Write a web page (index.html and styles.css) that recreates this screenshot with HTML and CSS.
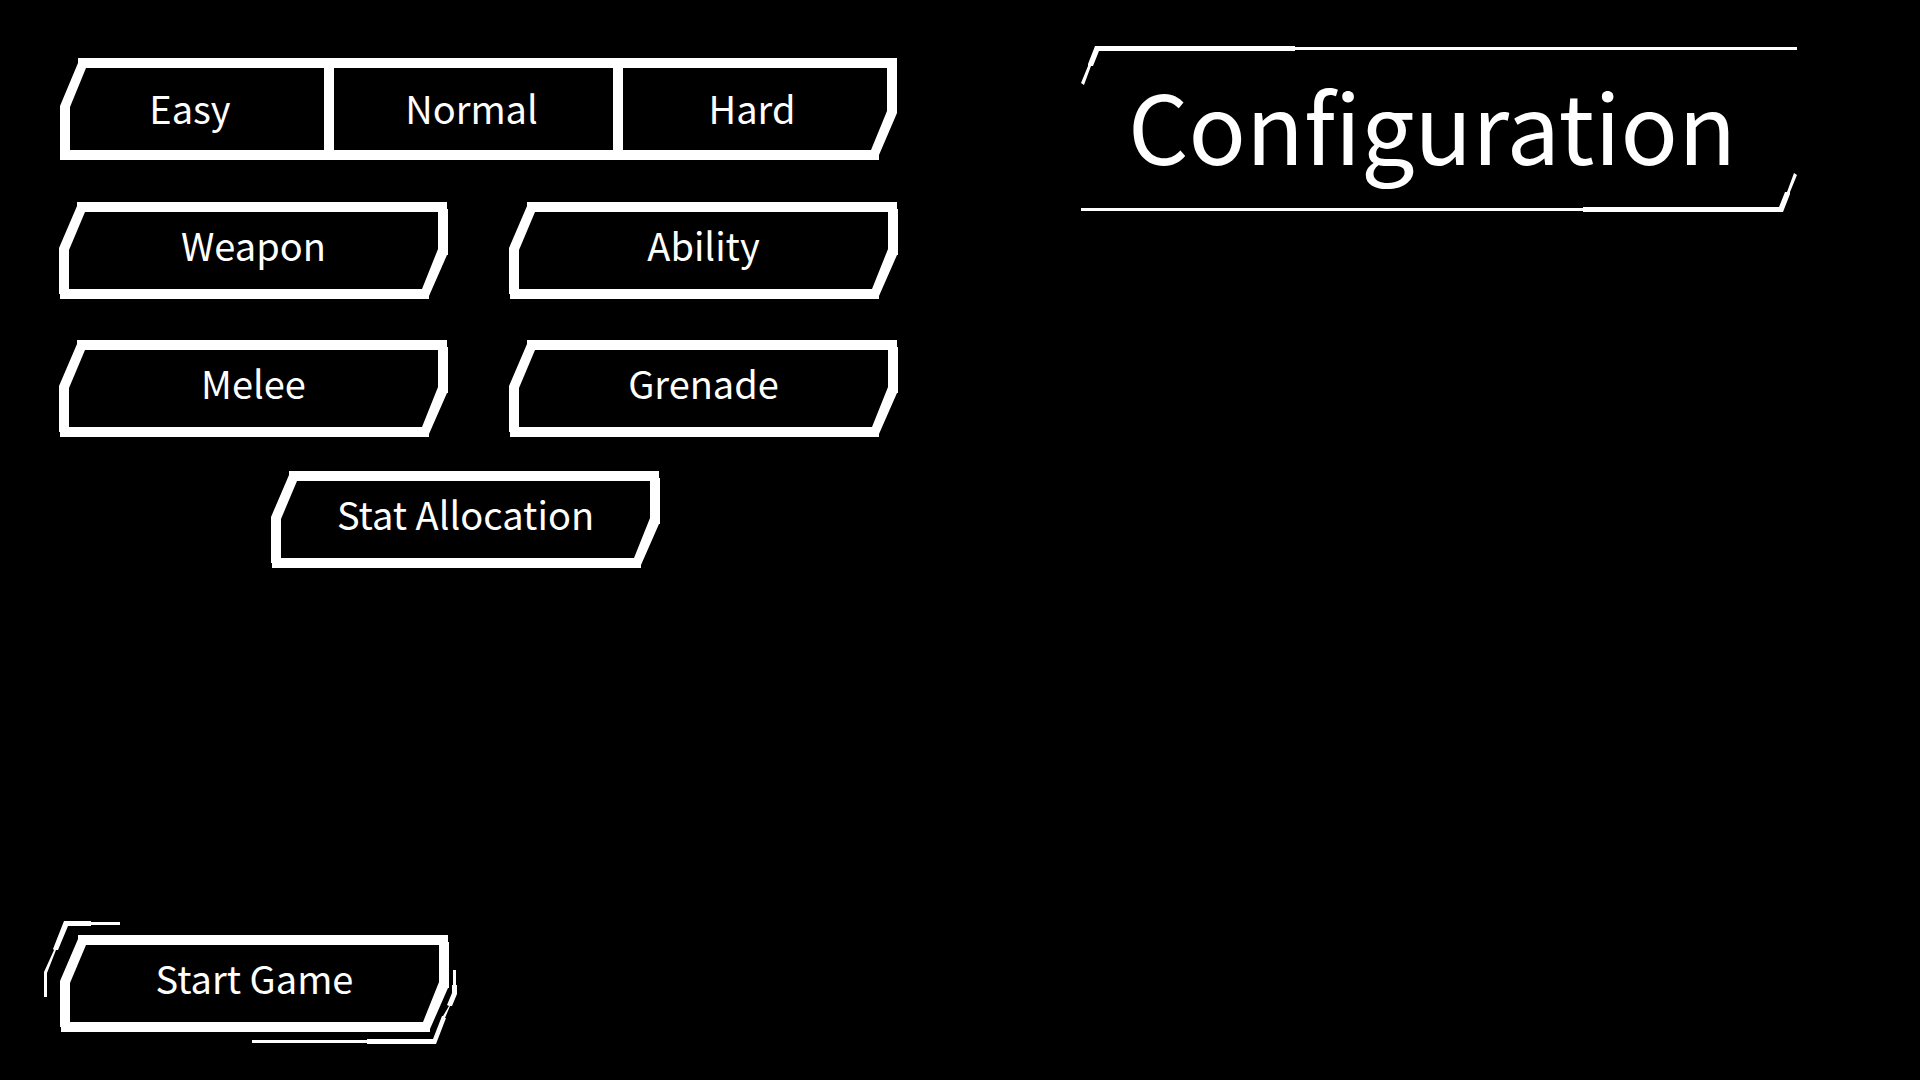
FILE: index.html
```html
<!DOCTYPE html>
<html lang="en">
<head>
<meta charset="utf-8">
<title>Configuration</title>
<meta name="viewport" content="width=device-width, initial-scale=1">
<link rel="stylesheet" href="styles.css">
</head>
<body>
<main class="screen">
  <section class="options" aria-label="Game options">
    <div class="difficulty" role="group" aria-label="Difficulty">
      <button class="level" type="button">Easy</button>
      <button class="level" type="button">Normal</button>
      <button class="level" type="button">Hard</button>
    </div>
    <div class="loadout">
      <button class="cut-button" type="button"><span>Weapon</span></button>
      <button class="cut-button" type="button"><span>Ability</span></button>
      <button class="cut-button" type="button"><span>Melee</span></button>
      <button class="cut-button" type="button"><span>Grenade</span></button>
    </div>
    <button class="cut-button stats" type="button"><span>Stat Allocation</span></button>
    <div class="start">
      <button class="cut-button" type="button"><span>Start Game</span></button>
      <svg class="trim trim-top" width="76" height="76" viewBox="0 0 76 76" aria-hidden="true">
        <path d="M20 0H47V1H76V4H47V5H24L14 29H12L3 52V76H0V51L10 29L9 28Z"/>
      </svg>
      <svg class="trim trim-bottom" width="205" height="74" viewBox="0 0 205 74" aria-hidden="true">
        <path d="M201 0H204V15H205V24L200 36H198L193 48H194L184 74H115V73H0V70H115V69H181L190 46H191L197 36L195 35L200 23V15H201Z"/>
      </svg>
    </div>
  </section>
  <header class="title">
    <h1>Configuration</h1>
  </header>
</main>
</body>
</html>
```
FILE: styles.css
```css
* {
  box-sizing: border-box;
}

body {
  margin: 0;
  background: #000;
  color: #fff;
  font-family: "Noto Sans CJK SC", "Noto Sans", sans-serif;
}

button {
  margin: 0;
  border: 0;
  padding: 0;
  color: inherit;
  font: inherit;
  font-size: 38px;
  line-height: 48px;
  cursor: pointer;
}

.screen {
  display: grid;
  grid-template-columns: 839fr 716fr;
  column-gap: 183px;
  min-height: 100vh;
  padding: 46px 123px 48px 59px;
}

.options {
  display: flex;
  flex-direction: column;
  padding-top: 12px;
}

/* Three-way switch inside one cut-corner frame */
.difficulty {
  position: relative;
  display: grid;
  grid-template-columns: 264fr 279fr 274fr;
  gap: 10px;
  height: 102px;
  margin: 0 1px 42px;
  background: #fff;
  clip-path: polygon(18px 0, 100% 0, 100% 55px, calc(100% - 18px) 97px, calc(100% - 18px) 100%, 0 100%, 0 48px, 18px 5px);
}

.level {
  margin: 10px 0;
  padding: 0 4px 2px 0;
  background: #000;
}

.level:first-child {
  clip-path: polygon(26px 0, 100% 0, 100% 100%, 10px 100%, 10px 39px);
}

.level:last-child {
  padding-right: 16px;
  clip-path: polygon(0 0, calc(100% - 10px) 0, calc(100% - 10px) 43px, calc(100% - 26px) 100%, 0 100%);
}

.loadout {
  display: grid;
  grid-template-columns: 1fr 1fr;
  gap: 41px 61px;
  margin-bottom: 34px;
}

.cut-button {
  display: grid;
  height: 97px;
  background: #fff;
  clip-path: polygon(18px 0, calc(100% - 1px) 0, calc(100% - 1px) 7px, 100% 7px, 100% 53px, calc(100% - 1px) 53px, calc(100% - 19px) 94px, calc(100% - 19px) 100%, 1px 100%, 1px 92px, 0 92px, 0 46px, 18px 4px);
}

.cut-button span {
  display: grid;
  place-items: center;
  height: 97px;
  padding-bottom: 12px;
  background: #000;
  clip-path: polygon(26px 10px, calc(100% - 10px) 10px, calc(100% - 10px) 47px, calc(100% - 26px) 87px, 10px 87px, 10px 48px);
}

.stats {
  width: calc((100% - 61px) / 2);
  margin-left: 212px;
}

.start {
  position: relative;
  display: grid;
  width: calc((100% - 61px) / 2);
  margin: auto 0 0 1px;
}

.trim {
  position: absolute;
  fill: #fff;
  pointer-events: none;
}

.trim-top {
  top: -14px;
  left: -16px;
}

.trim-bottom {
  right: -8px;
  bottom: -12px;
}

.title {
  align-self: start;
  display: grid;
}

/* The same rule is used above and, turned half round, below the heading */
.title::before,
.title::after {
  content: "";
  height: 39px;
  background: #fff;
  clip-path: polygon(14px 0, 214px 0, 214px 1px, 100% 1px, 100% 4px, 214px 4px, 214px 5px, 18px 5px, 12px 20px, 10px 20px, 3px 39px, 0 37px, 7px 20px, 7px 18px);
}

.title::after {
  transform: rotate(180deg);
}

.title h1 {
  margin: 0;
  padding: 0 14px 10px 0;
  font-size: 95px;
  font-weight: 400;
  line-height: 78px;
  text-align: center;
}
```
